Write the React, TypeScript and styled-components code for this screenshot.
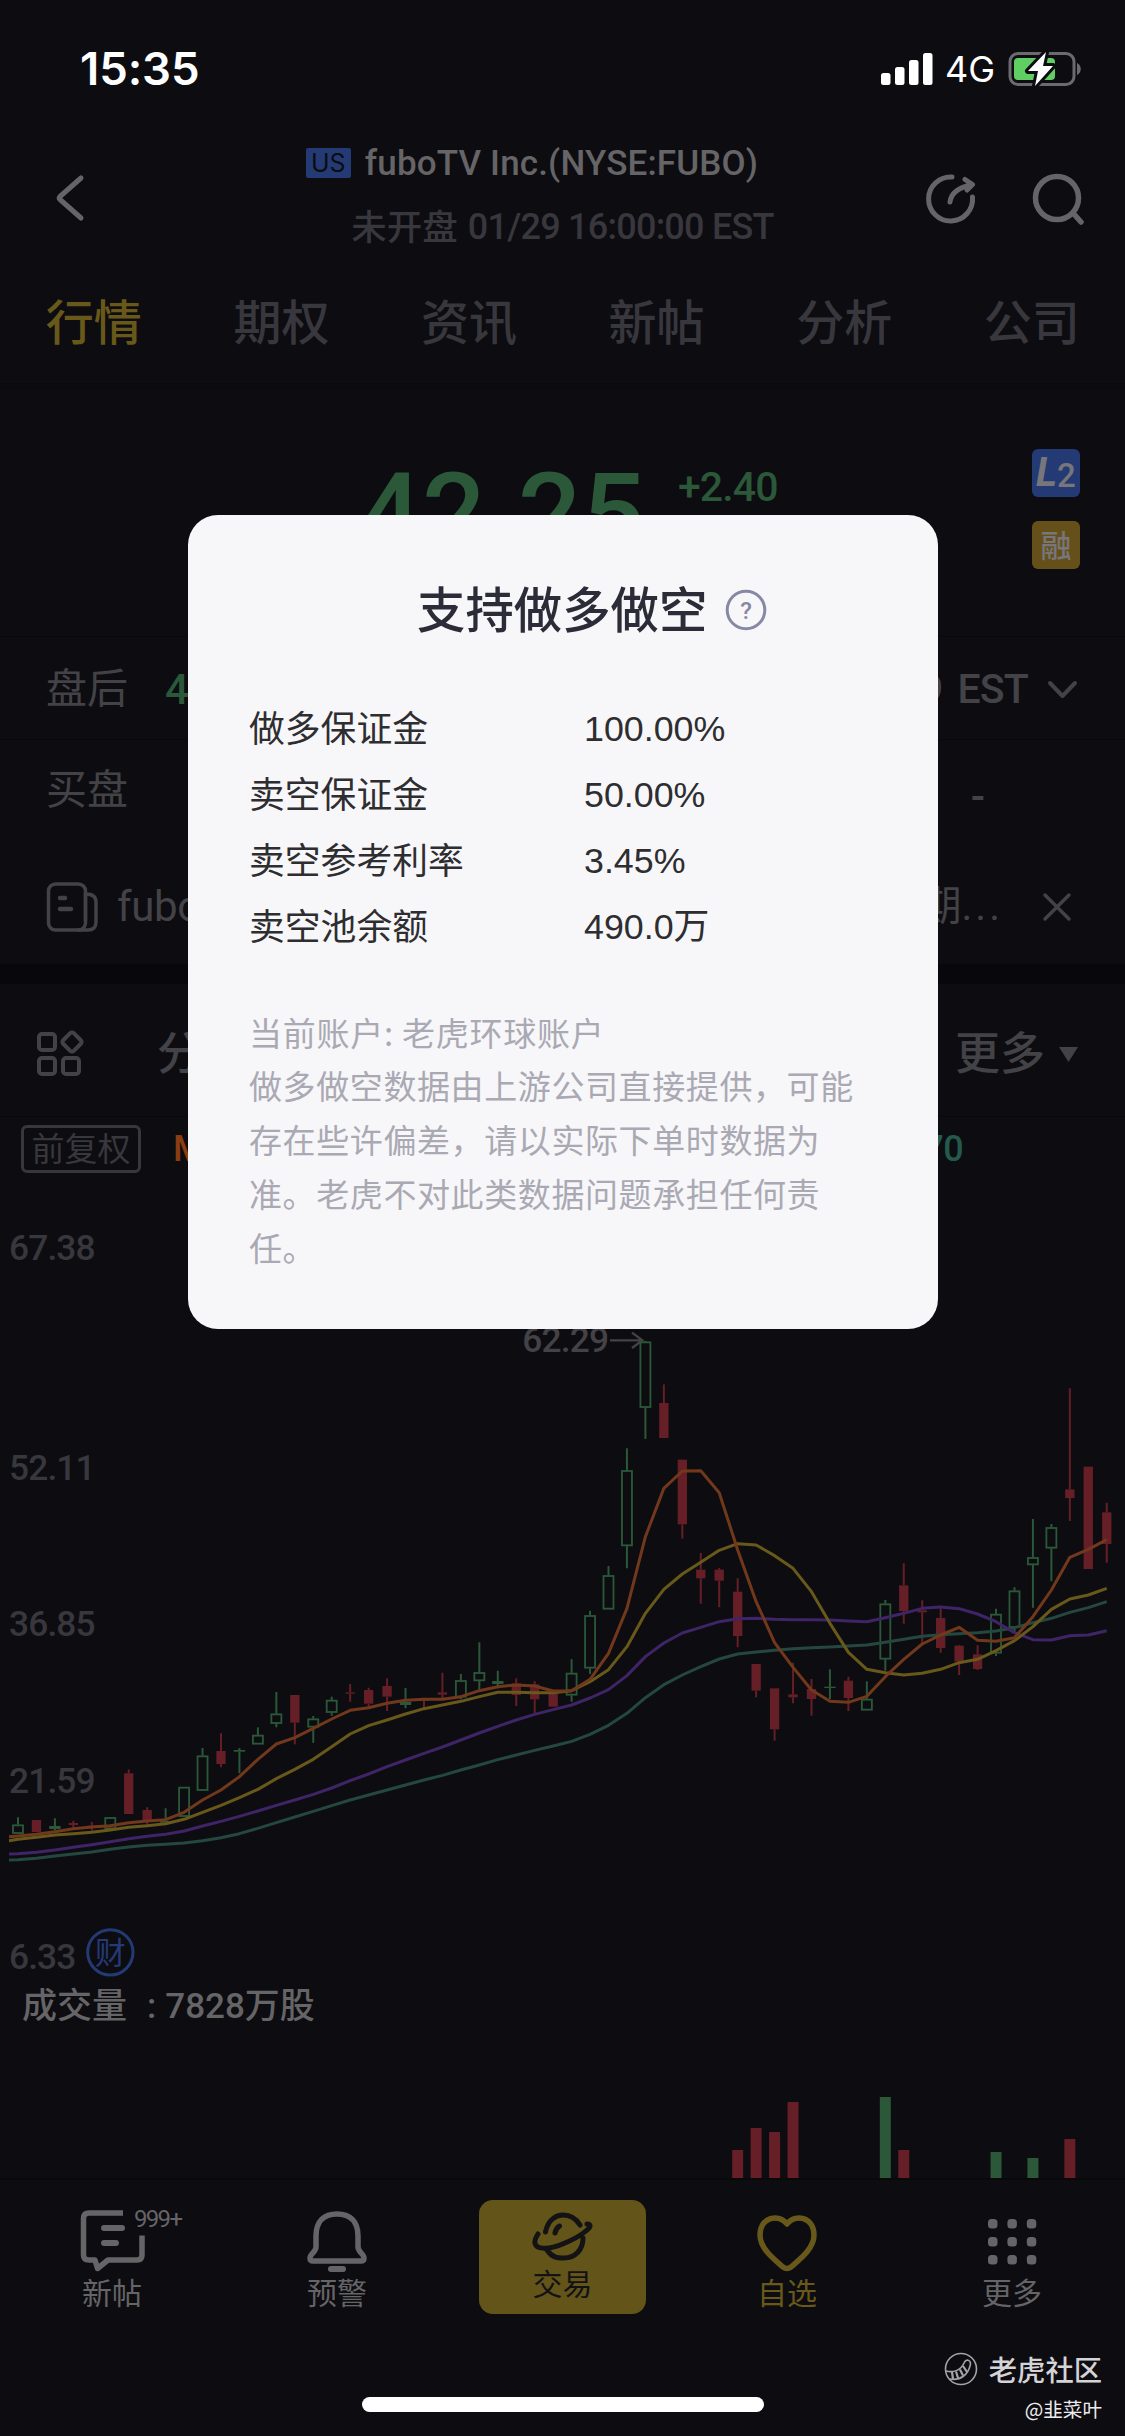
import React from "react";
import styled, { createGlobalStyle } from "styled-components";

const C = {
  bg: "#0d0c11",
  line: "#09090c",
  grey: "#656466",
  dim: "#38373d",
  mid: "#434247",
  yellow: "#68591b",
  green: "#2a5838",
  red: "#661e27",
  orange: "#72381c",
  purple: "#3f2467",
  teal: "#24483f",
  blue: "#243a75",
};

const cjk = `"Noto Sans CJK SC", sans-serif`;

const GlobalStyle = createGlobalStyle`
  * { box-sizing: border-box; }
  body { margin: 0; background: ${C.bg}; }
`;

const Screen = styled.main`
  position: relative;
  width: 1125px;
  height: 2436px;
  overflow: hidden;
  display: flex;
  flex-direction: column;
  background: ${C.bg};
  font-family: Roboto, ${cjk};
  color: ${C.grey};
  white-space: nowrap;
`;

const Text = styled.span<{ $size: number; $color?: string; $ls?: number; $weight?: number; $drop?: number }>`
  font-size: ${(p) => p.$size}px;
  line-height: 1.2;
  color: ${(p) => p.$color ?? "inherit"};
  letter-spacing: ${(p) => p.$ls ?? 0}px;
  font-weight: ${(p) => p.$weight ?? 400};
  padding-top: ${(p) => p.$drop ?? 0}px;
`;

const StatusBar = styled.div`
  height: 132px;
  padding: 0 43px 0 80px;
  display: flex;
  justify-content: space-between;
  align-items: flex-start;
  color: #fff;
`;
const Clock = styled.div`
  margin-top: 41px;
  font: 600 45.5px/56px Inter, sans-serif;
  letter-spacing: -0.1px;
`;
const StatusIcons = styled.div`
  margin-top: 49px;
  height: 40px;
  display: flex;
  align-items: center;
  gap: 12px;
  font: 400 36px/40px Inter, sans-serif;
`;

const Header = styled.header`
  height: 132px;
  display: grid;
  grid-template-columns: 250px 1fr 250px;
  align-items: center;
`;
const HeaderLeft = styled.div`
  padding-left: 54px;
  display: flex;
`;
const HeaderRight = styled.div`
  padding-right: 39px;
  display: flex;
  justify-content: flex-end;
  gap: 54px;
`;
const Titles = styled.div`
  padding-bottom: 4px;
  display: flex;
  flex-direction: column;
  align-items: center;
  gap: 12px;
`;
const TitleRow = styled.div`
  height: 52px;
  margin-right: 61px;
  display: flex;
  align-items: center;
  gap: 14px;
`;
const SubRow = styled.div`
  height: 52px;
  display: flex;
  align-items: center;
  gap: 10px;
  color: ${C.dim};
`;
const Market = styled.span`
  width: 45px;
  height: 30px;
  margin-bottom: 2px;
  border-radius: 2px;
  background: ${C.blue};
  color: ${C.bg};
  text-align: center;
  font: 400 25px/31px Inter, sans-serif;
`;

const Tabs = styled.nav`
  height: 120px;
  border-bottom: 1px solid ${C.line};
  display: grid;
  grid-template-columns: repeat(6, 187.6px);
  align-items: center;
`;
const Tab = styled.span<{ $on?: boolean }>`
  text-align: center;
  padding-bottom: 9px;
  font: 500 48px/64px ${cjk};
  color: ${(p) => (p.$on ? C.yellow : C.dim)};
`;

const Quote = styled.section`
  height: 253px;
  border-top: 6px solid #0b0a0f;
  border-bottom: 1px solid ${C.line};
  padding: 59px 45px 0 358px;
  display: flex;
  align-items: flex-start;
`;
const Price = styled.div`
  width: 320px;
  font-size: 112px;
  line-height: 130px;
  font-weight: 500;
  letter-spacing: 0.4px;
  color: ${C.green};
`;
const Change = styled.div`
  padding-top: 13px;
  font-size: 41px;
  line-height: 51px;
  font-weight: 500;
  letter-spacing: -0.9px;
  color: ${C.green};
`;
const Badges = styled.div`
  margin-left: auto;
  display: flex;
  flex-direction: column;
  gap: 24px;
`;
const Badge = styled.span<{ $bg: string }>`
  width: 48px;
  height: 48px;
  border-radius: 6px;
  background: ${(p) => p.$bg};
  color: #77767b;
  display: flex;
  align-items: center;
  justify-content: center;
  font: 500 31px/44px ${cjk};
  padding-bottom: 3px;
`;
const Level = styled(Badge)`
  padding: 0;
  font: italic 700 40px/48px Roboto, sans-serif;
  small { font-style: normal; font-weight: 500; font-size: 33px; padding-top: 6px; }
`;

const Row = styled.div<{ $h: number; $line?: boolean; $pt?: number }>`
  height: ${(p) => p.$h}px;
  padding: ${(p) => p.$pt ?? 0}px 46px 0;
  border-bottom: ${(p) => (p.$line ? `1px solid ${C.line}` : "none")};
  display: flex;
  align-items: center;
  color: ${C.mid};
`;
const Push = styled.span`
  margin-left: auto;
  display: flex;
  align-items: center;
`;
const Gap = styled.span<{ $w: number }>`
  width: ${(p) => p.$w}px;
`;
const Divider = styled.div`
  height: 20px;
  background: #08070b;
`;
const Toolbar = styled(Row)`
  padding-left: 35px;
`;

const ChartHead = styled.div`
  height: 65px;
  padding: 8px 0 0 21px;
  display: flex;
  align-items: flex-start;
`;
const Adjust = styled.span`
  width: 120px;
  height: 48px;
  border: 3px solid ${C.dim};
  border-radius: 6px;
  text-align: center;
  font: 400 33px/39px ${cjk};
  color: ${C.dim};
`;
const Averages = styled.div`
  width: 790px;
  margin-left: 32px;
  display: flex;
  justify-content: space-between;
`;
const Average = styled.span<{ $color: string }>`
  font-size: 36px;
  font-weight: 500;
  line-height: 48px;
  letter-spacing: -0.6px;
  color: ${(p) => p.$color};
`;
const Chart = styled.svg`
  display: block;
  width: 1125px;
  font-family: Roboto, ${cjk};
`;
const VolumeLabel = styled.div`
  height: 50px;
  padding: 3px 22px 0;
  display: flex;
  align-items: center;
  font: 500 35px/47px Roboto, ${cjk};
`;

const NavBar = styled.nav`
  height: 140px;
  border-top: 2px solid ${C.line};
  display: grid;
  grid-template-columns: repeat(5, 1fr);
`;
const NavItem = styled.div<{ $color?: string }>`
  display: flex;
  flex-direction: column;
  align-items: center;
  padding-top: 24px;
  padding-right: 1px;
  color: ${(p) => p.$color ?? C.grey};
  font: 400 30px/40px ${cjk};
  svg { display: block; margin-bottom: 1px; overflow: visible; }
`;
const TradeItem = styled.div`
  margin: 20px 29px 0;
  height: 114px;
  border-radius: 14px;
  background: #635419;
  color: #131215;
  display: flex;
  flex-direction: column;
  align-items: center;
  padding-top: 9px;
  font: 400 30px/40px ${cjk};
  svg { display: block; margin-bottom: -3px; }
`;
const HomeBar = styled.div`
  width: 402px;
  height: 15px;
  margin: 79px auto 0;
  border-radius: 8px;
  background: #fff;
`;

const Watermark = styled.div`
  position: absolute;
  right: 23px;
  bottom: 11px;
  display: flex;
  flex-direction: column;
  align-items: flex-end;
  color: #d4d4d7;
`;
const Brand = styled.div`
  display: flex;
  align-items: center;
  gap: 11px;
  font: 500 28.3px/40px ${cjk};
`;
const Author = styled.div`
  margin-top: 4px;
  font: 400 19.6px/32px ${cjk};
  color: #ececee;
`;

const Dialog = styled.section`
  position: absolute;
  left: 188px;
  top: 515px;
  width: 750px;
  height: 814px;
  padding: 60px 61px 0;
  border-radius: 30px;
  background: #f7f7fa;
  color: #2e2d30;
`;
const DialogTitle = styled.h2`
  margin: 0 0 52px;
  height: 70px;
  padding-left: 168px;
  display: flex;
  align-items: center;
  gap: 18px;
  font: 500 48.4px/64px ${cjk};
  color: #2c2b38;
  span { padding-bottom: 6px; }
`;
const Facts = styled.dl`
  margin: 0;
  display: grid;
  grid-template-columns: 335px 1fr;
  grid-auto-rows: 66px;
  align-items: center;
  font: 400 35.8px/50px "Liberation Sans", ${cjk};
  dt, dd { margin: 0; }
  dd { padding-bottom: 2px; }
`;
const Note = styled.div`
  margin-top: 46px;
  width: 610px;
  white-space: normal;
  font: 400 33px/54px ${cjk};
  letter-spacing: 0.6px;
  color: #aaa9b3;
  p { margin: 0; }
  p:first-child { line-height: 51px; letter-spacing: 0.75px; }
`;

/* Candles: up flag, high, body top, body bottom, low. Three units to a pixel. */
const candles: [0 | 1, number, number, number, number][] = [
  [1, 1492, 1514, 1541, 1541], [0, 1500, 1500, 1536, 1536], [1, 1495, 1518, 1527, 1530], [0, 1502, 1509, 1515, 1530],
  [0, 1506, 1517, 1521, 1532], [1, 1492, 1492, 1527, 1527], [0, 1348, 1360, 1482, 1482], [0, 1462, 1470, 1503, 1512],
  [1, 1465, 1503, 1508, 1510], [1, 1401, 1401, 1490, 1490], [1, 1284, 1307, 1412, 1412], [0, 1240, 1293, 1332, 1342],
  [1, 1284, 1290, 1295, 1360], [1, 1222, 1245, 1273, 1273], [1, 1116, 1181, 1211, 1222], [0, 1125, 1125, 1208, 1273],
  [1, 1188, 1196, 1222, 1268], [1, 1130, 1140, 1178, 1187], [0, 1092, 1117, 1121, 1145], [0, 1103, 1110, 1151, 1160],
  [0, 1075, 1098, 1130, 1173], [1, 1104, 1145, 1155, 1165], [0, 1140, 1140, 1143, 1165], [0, 1058, 1117, 1124, 1140],
  [1, 1062, 1081, 1132, 1138], [1, 967, 1057, 1083, 1115], [1, 1052, 1083, 1092, 1105], [0, 1075, 1090, 1125, 1158],
  [0, 1084, 1093, 1138, 1184], [0, 1122, 1122, 1160, 1160], [1, 1018, 1059, 1126, 1145], [1, 872, 886, 1045, 1062],
  [1, 738, 766, 868, 868], [1, 385, 451, 678, 745], [1, 62, 65, 263, 357], [0, 193, 249, 354, 354],
  [0, 419, 419, 613, 656], [0, 699, 749, 775, 851], [0, 744, 749, 782, 862], [0, 775, 815, 948, 982],
  [0, 1032, 1032, 1112, 1132], [0, 1105, 1105, 1228, 1262], [0, 1028, 1123, 1132, 1150], [0, 1077, 1107, 1137, 1187],
  [1, 1048, 1100, 1104, 1138], [0, 1070, 1082, 1134, 1173], [1, 1084, 1137, 1171, 1171], [1, 840, 851, 1018, 1052],
  [0, 730, 796, 873, 911], [0, 841, 871, 877, 972], [0, 866, 894, 984, 998], [0, 975, 977, 1025, 1065],
  [0, 976, 1003, 1047, 1050], [1, 866, 882, 1000, 1008], [1, 802, 812, 923, 936], [1, 597, 712, 735, 863],
  [1, 612, 622, 685, 784], [0, 205, 508, 534, 603], [0, 440, 440, 747, 747], [0, 548, 577, 672, 728],
];

const averages: { color: string; start: number; y: number[] }[] = [
  { color: C.teal, start: 1620, y: [1619, 1615, 1608, 1602, 1596, 1588, 1581, 1576, 1573, 1569, 1562, 1553, 1541, 1525, 1508, 1491, 1474, 1457, 1440, 1425, 1410, 1395, 1380, 1366, 1350, 1335, 1319, 1305, 1291, 1278, 1264, 1243, 1216, 1180, 1133, 1094, 1065, 1040, 1017, 1002, 996, 991, 986, 983, 981, 978, 975, 967, 958, 949, 944, 941, 938, 933, 923, 908, 895, 877, 863, 845] },
  { color: C.purple, start: 1602, y: [1601, 1597, 1590, 1582, 1574, 1565, 1556, 1549, 1543, 1533, 1518, 1504, 1489, 1473, 1456, 1440, 1423, 1404, 1382, 1362, 1340, 1320, 1300, 1281, 1260, 1239, 1219, 1200, 1183, 1169, 1155, 1134, 1109, 1067, 1010, 969, 939, 922, 905, 896, 895, 898, 899, 899, 900, 903, 905, 893, 880, 865, 861, 866, 882, 905, 938, 959, 960, 947, 945, 932] },
  { color: "#68591b", start: 1562, y: [1558, 1552, 1545, 1541, 1537, 1530, 1522, 1517, 1511, 1498, 1477, 1456, 1433, 1408, 1376, 1348, 1318, 1280, 1242, 1217, 1200, 1182, 1166, 1155, 1144, 1130, 1117, 1117, 1118, 1118, 1112, 1085, 1049, 980, 880, 808, 762, 727, 691, 671, 675, 707, 745, 815, 910, 997, 1048, 1058, 1065, 1060, 1048, 1028, 1018, 992, 962, 920, 868, 837, 825, 805] },
  { color: C.orange, start: 1550, y: [1548, 1543, 1535, 1526, 1521, 1517, 1508, 1503, 1499, 1477, 1440, 1410, 1370, 1318, 1272, 1253, 1225, 1197, 1171, 1163, 1150, 1141, 1138, 1138, 1130, 1112, 1100, 1095, 1098, 1113, 1112, 1078, 1000, 865, 650, 505, 453, 452, 518, 690, 845, 968, 1042, 1110, 1144, 1147, 1129, 1070, 1018, 972, 945, 922, 961, 964, 953, 890, 810, 712, 688, 659] },
];

const axis: [string, number][] = [["67.38", 1260], ["52.11", 1479.5], ["36.85", 1636], ["21.59", 1793], ["6.33", 1969]];

const volumes: [number, number, 0 | 1][] = [
  [39, 28, 0], [40, 50, 0], [41, 46, 0], [42, 76, 0], [47, 81, 1], [48, 28, 0], [53, 26, 1], [55, 20, 1], [57, 39, 0],
];

const cx = (i: number) => 54 + i * 55.36;

function PriceChart() {
  return (
    <Chart viewBox="0 -414 3375 2394" height={798}>
      {axis.map(([label, y]) => (
        <text key={label} x={27} y={(y - 1320) * 3} fontSize={106} fontWeight={500} fill={C.dim} textLength={label === "6.33" ? 202 : 260}>
          {label}
        </text>
      ))}
      <text x={1567} y={96} fontSize={106} fontWeight={500} fill={C.mid} textLength={260}>62.29</text>
      <path d="M1830 61H1925M1896 38L1927 61L1896 84" fill="none" stroke={C.mid} strokeWidth={7} />
      {candles.map(([up, hi, top, bottom, lo], i) => {
        const x = cx(i);
        const color = up ? C.green : C.red;
        const flat = bottom - top < 14;
        return (
          <g key={i} stroke={color} strokeWidth={6}>
            <path d={`M${x} ${hi}V${top}M${x} ${bottom}V${lo}`} />
            {up && !flat ? (
              <rect x={x - 15} y={top + 2} width={30} height={bottom - top - 4} fill="none" strokeWidth={5.5} />
            ) : (
              <rect x={x - (up ? 17 : 14)} y={top} width={up ? 34 : 28} height={bottom - top} fill={color} stroke="none" />
            )}
          </g>
        );
      })}
      {averages.map((a) => (
        <polyline
          key={a.color}
          fill="none"
          stroke={a.color}
          strokeWidth={9}
          strokeLinejoin="round"
          points={`27,${a.start} ` + a.y.map((y, i) => `${cx(i)},${y}`).join(" ")}
        />
      ))}
      <circle cx={331} cy={1897} r={68} fill="none" stroke={C.blue} strokeWidth={9} />
      <text x={331} y={1932} fontSize={92} fill={C.blue} textAnchor="middle">财</text>
    </Chart>
  );
}

export default function App() {
  return (
    <Screen>
      <GlobalStyle />
      <StatusBar>
        <Clock>15:35</Clock>
        <StatusIcons>
          <svg width="52" height="40" fill="#fff">
            <rect x="0" y="24" width="9.5" height="12" rx="2.5" />
            <rect x="14" y="18" width="9.5" height="18" rx="2.5" />
            <rect x="28" y="11" width="9.5" height="25" rx="2.5" />
            <rect x="42" y="4" width="9.5" height="32" rx="2.5" />
          </svg>
          <span>4G</span>
          <svg width="75" height="40">
            <rect x="3" y="4.5" width="64" height="31" rx="8" fill="none" stroke="#6b6a6e" strokeWidth="3" />
            <path d="M70 14c5 2 5 10 0 12z" fill="#6b6a6e" />
            <rect x="7" y="9" width="41" height="22" rx="4" fill="#5fcf63" />
            <path d="M39 3L21 22h10l-3 15L46 17H36z" fill="#fff" stroke={C.bg} strokeWidth="6" strokeLinejoin="round" paintOrder="stroke" />
          </svg>
        </StatusIcons>
      </StatusBar>

      <Header>
        <HeaderLeft>
          <svg width="34" height="50" fill="none" stroke={C.grey} strokeWidth="5" strokeLinecap="round" strokeLinejoin="round">
            <path d="M27 5L6 23.5Q4.500 25 6 26.500L27 45" />
          </svg>
        </HeaderLeft>
        <Titles>
          <TitleRow>
            <Market>US</Market>
            <Text $size={35} $weight={500} $ls={0.15}>fuboTV Inc.(NYSE:FUBO)</Text>
          </TitleRow>
          <SubRow>
            <Text $size={35.500} $weight={500}>未开盘</Text>
            <Text $size={36} $weight={500} $ls={-0.75}>01/29 16:00:00 EST</Text>
          </SubRow>
        </Titles>
        <HeaderRight>
          <svg width="54" height="54" fill="none" stroke={C.grey} strokeWidth="5" strokeLinecap="round" strokeLinejoin="round">
            <path d="M30 6A22 22 0 1 0 50.500 26M28 31C29 23 34 17 49 14M43 8.500L50.500 13.500L45 19" />
          </svg>
          <svg width="56" height="54" fill="none" stroke={C.grey} strokeLinecap="round">
            <circle cx="27" cy="27" r="21.500" strokeWidth="5.500" />
            <path d="M43 42L51 51" strokeWidth="5.500" />
          </svg>
        </HeaderRight>
      </Header>

      <Tabs>
        {["行情", "期权", "资讯", "新帖", "分析", "公司"].map((t, i) => (
          <Tab key={t} $on={i === 0}>{t}</Tab>
        ))}
      </Tabs>

      <Quote>
        <Price>42.25</Price>
        <Change>+2.40</Change>
        <Badges>
          <Level $bg={C.blue}>L<small>2</small></Level>
          <Badge $bg="#66501a">融</Badge>
        </Badges>
      </Quote>

      <Row $h={103} $pt={4} $line>
        <Text $size={41}>盘后</Text>
        <Gap $w={37} />
        <Text $size={42} $weight={500} $color={C.green}>42.27</Text>
        <Push>
          <Text $size={41} $weight={500} $ls={-0.8}>19:59:59</Text>
          <Gap $w={15} />
          <Text $size={41} $weight={500} $ls={-0.8}>EST</Text>
          <Gap $w={19} />
          <svg width="32" height="20" fill="none" stroke={C.mid} strokeWidth="4" strokeLinecap="round" strokeLinejoin="round">
            <path d="M3 3L15.500 16L28 3" />
          </svg>
        </Push>
      </Row>
      <Row $h={98} $pt={4}>
        <Text $size={41}>买盘</Text>
        <Push>
          <Text $size={42} $weight={500} $drop={13}>-</Text>
          <Gap $w={94} />
        </Push>
      </Row>
      <Row $h={126} $pt={12}>
        <svg width="52" height="50" fill="none" stroke={C.mid} strokeWidth="3.500" strokeLinecap="round">
          <rect x="2.500" y="2" width="37" height="46" rx="7" />
          <path d="M32 48H42Q50 48 50 40V20Q50 12 39.500 12V39" />
          <path d="M14 16H19M14 27H25" strokeWidth="4.500" />
        </svg>
        <Gap $w={19} />
        <Text $size={42} $ls={-0.4}>fuboTV</Text>
        <Push>
          <Text $size={41}>期</Text>
          <Text $size={41} $ls={3}>...</Text>
          <Gap $w={37} />
          <svg width="39" height="32" fill="none" stroke={C.mid} strokeWidth="3.500" strokeLinecap="round">
            <path d="M5 4L29 28M29 4L5 28" />
          </svg>
        </Push>
      </Row>
      <Divider />

      <Toolbar $h={133} $pt={9} $line>
        <svg width="50" height="50" fill="none" stroke={C.mid} strokeWidth="4" strokeLinejoin="round">
          <rect x="4" y="4" width="16" height="16" rx="3" />
          <rect x="4" y="28" width="16" height="16" rx="3" />
          <rect x="28" y="28" width="16" height="16" rx="3" />
          <rect x="29.500" y="4.500" width="15" height="15" rx="2.500" transform="rotate(45 37 12)" />
        </svg>
        <Gap $w={72} />
        <Text $size={45} $weight={500}>分时</Text>
        <Push>
          <Text $size={45} $weight={500}>更多</Text>
          <Gap $w={14} />
          <svg width="20" height="16">
            <path d="M0 0H19L9.500 15Z" fill={C.mid} />
          </svg>
        </Push>
      </Toolbar>

      <ChartHead>
        <Adjust>前复权</Adjust>
        <Averages>
          <Average $color="#8a3d12">MA</Average>
          <Average $color="#235a4c">34.70</Average>
        </Averages>
      </ChartHead>
      <PriceChart />
      <VolumeLabel>
        <span>成交量</span>
        <Gap $w={20} />
        <span>:</span>
        <Gap $w={9} />
        <span>7828万股</span>
      </VolumeLabel>
      <Chart viewBox="0 0 1125 148" height={148}>
        {volumes.map(([i, h, up]) => (
          <rect key={i} x={cx(i) / 3 - 5.5} y={148 - h} width={11} height={h} fill={up ? C.green : C.red} />
        ))}
      </Chart>

      <NavBar>
        <NavItem>
          <svg width="64" height="66" fill="none" stroke={C.grey} strokeWidth="5.500" strokeLinejoin="round">
            <path d="M43 9H9Q3.500 9 3.500 14.500V51Q3.500 56 9 56H15L17.500 64.500L28 56H57Q62 56 62 51V31.500" />
            <path d="M24 24H42M24 39H36" strokeWidth="6" strokeLinecap="round" />
            <text x="54" y="23" fontSize="24" fontFamily="Roboto" fill={C.grey} stroke="none" textLength="49">999+</text>
          </svg>
          新帖
        </NavItem>
        <NavItem>
          <svg width="64" height="66" fill="none" stroke={C.grey} strokeWidth="5.500" strokeLinejoin="round">
            <path d="M11 32C11 17 19 10 32 10S53 17 53 32V43C53 48 59 50 59 54Q59 57 56 57H8Q5 57 5 54C5 50 11 48 11 43Z" />
            <path d="M26 65H38" strokeWidth="6" strokeLinecap="round" />
          </svg>
          预警
        </NavItem>
        <TradeItem>
          <svg width="64" height="56" fill="none" stroke="#131215" strokeWidth="5" strokeLinecap="round">
            <path d="M14.500 23C17 10 26 6 32 6C41 6 46 11 49 16" />
            <path d="M7 25C-4 42 16 42 34 34C53 26 65 15 56 15" />
            <path d="M16 41C22 50 29 49 33 49C44 49 52 41 52 29" />
            <path d="M24 24Q25 19 28.500 17" />
          </svg>
          交易
        </TradeItem>
        <NavItem $color={C.yellow}>
          <svg width="64" height="66" fill="none" stroke={C.yellow} strokeWidth="5.500" strokeLinejoin="round">
            <path d="M32 20C24 9 5 13 5 31C5 45 20 56 28 63Q32 66 36 63C44 56 59 45 59 31C59 13 40 9 32 20Z" />
          </svg>
          自选
        </NavItem>
        <NavItem>
          <svg width="64" height="66" fill={C.grey}>
            {[0, 1, 2].map((r) =>
              [0, 1, 2].map((c) => <rect key={`${r}${c}`} x={8 + c * 19.4} y={15 + r * 18} width={9.5} height={9.5} rx={3.5} />),
            )}
          </svg>
          更多
        </NavItem>
      </NavBar>
      <HomeBar />

      <Watermark>
        <Brand>
          <svg width="34" height="34" fill="none" stroke="#a5a5a9" strokeWidth="1.600">
            <circle cx="17" cy="17" r="15.500" />
            <path d="M2 19C10 21 17 18 20 11C22 6 28 8 26 14C24 22 17 29 6 27" />
            <path d="M8 20L9 27M12 19.500L14 26M16 17.500L19 23.500M19 14L23 20" strokeWidth="2.200" />
          </svg>
          老虎社区
        </Brand>
        <Author>@韭菜叶</Author>
      </Watermark>

      <Dialog>
        <DialogTitle>
          <span>支持做多做空</span>
          <svg width="42" height="42">
            <circle cx="21" cy="21" r="18.800" fill="none" stroke="#8788a3" strokeWidth="3" />
            <text x="21" y="29.500" fontSize="24" fontWeight="500" fontFamily="Roboto" textAnchor="middle" fill="#8788a3">?</text>
          </svg>
        </DialogTitle>
        <Facts>
          <dt>做多保证金</dt><dd>100.00%</dd>
          <dt>卖空保证金</dt><dd>50.00%</dd>
          <dt>卖空参考利率</dt><dd>3.45%</dd>
          <dt>卖空池余额</dt><dd>490.0万</dd>
        </Facts>
        <Note>
          <p>当前账户: 老虎环球账户</p>
          <p>做多做空数据由上游公司直接提供，可能存在些许偏差，请以实际下单时数据为准。老虎不对此类数据问题承担任何责任。</p>
        </Note>
      </Dialog>
    </Screen>
  );
}
